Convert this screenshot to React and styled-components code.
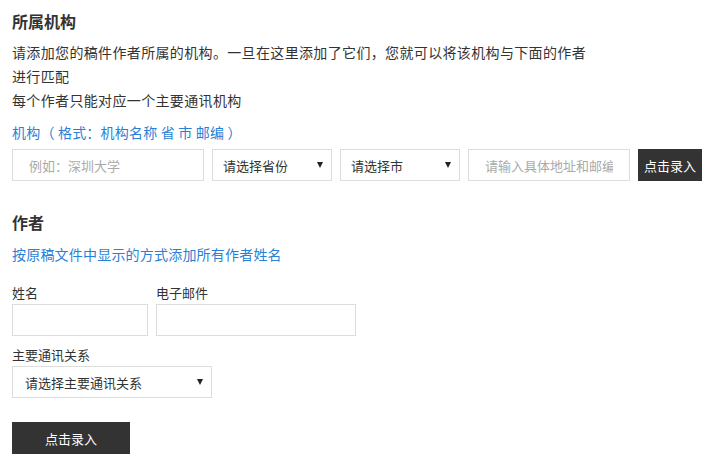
import React from 'react';
import styled, { createGlobalStyle } from 'styled-components';

const GlobalStyle = createGlobalStyle`
  html, body {
    margin: 0;
    padding: 0;
    background: #fff;
  }
  body {
    font-family: "Noto Sans CJK SC", "Liberation Sans", sans-serif;
    color: #333;
    font-size: 13px;
  }
  * {
    box-sizing: border-box;
  }
`;

const Page = styled.div`
  padding: 9px 12px 0;
  width: 721px;
`;

const Section = styled.section`
  margin-bottom: ${props => props.gap || 0}px;
`;

const Title = styled.h2`
  margin: 0;
  font-size: 16px;
  line-height: 24px;
  font-weight: bold;
  color: #333;
`;

const Intro = styled.p`
  margin: ${props => props.top || 0}px 0 0;
  font-size: 14px;
  line-height: 24px;
  letter-spacing: 0.35px;
  color: #333;
`;

const Hint = styled.p`
  margin: ${props => props.top || 0}px 0 0;
  font-size: 14px;
  line-height: 24px;
  letter-spacing: 0.2px;
  color: #2a7fd7;
  white-space: pre;
`;

const InputRow = styled.div`
  display: flex;
  gap: 8px;
  margin-top: ${props => props.top || 0}px;
`;

const TextInput = styled.input`
  width: ${props => props.width}px;
  height: 32px;
  border: 1px solid #ddd;
  border-radius: 0;
  padding: 0 ${props => props.pad || 10}px;
  font-family: inherit;
  font-size: 13px;
  color: #333;
  background: #fff;
  outline: none;

  &::placeholder {
    color: #aaa;
  }
`;

const SelectBox = styled.div`
  width: ${props => props.width}px;
  height: 32px;
  border: 1px solid #ddd;
  display: flex;
  align-items: center;
  justify-content: space-between;
  padding: 0 ${props => props.arrowPad || 8}px 0 ${props => props.pad || 10}px;
  font-size: 13px;
  color: #333;
  background: #fff;
  cursor: pointer;
`;

const Arrow = styled.span`
  width: 0;
  height: 0;
  border-left: 3px solid transparent;
  border-right: 3px solid transparent;
  border-top: 6px solid #222;
`;

const DarkButton = styled.button`
  width: ${props => props.width}px;
  height: 32px;
  border: 0;
  border-radius: 0;
  background: #333;
  color: #fff;
  font-family: inherit;
  font-size: 13px;
  padding: 0;
  cursor: pointer;
  margin-top: ${props => props.top || 0}px;
`;

const FieldRow = styled.div`
  display: flex;
  gap: 8px;
  margin-top: ${props => props.top || 0}px;
`;

const Field = styled.div`
  display: flex;
  flex-direction: column;
  gap: 2px;
  margin-top: ${props => props.top || 0}px;
`;

const FieldLabel = styled.label`
  font-size: 13px;
  line-height: 18px;
  color: #333;
`;

const Select = ({ width, pad, arrowPad, children }) => (
  <SelectBox width={width} pad={pad} arrowPad={arrowPad}>
    <span>{children}</span>
    <Arrow />
  </SelectBox>
);

const App = () => {
  return (
    <>
      <GlobalStyle />
      <Page>
        <Section gap={29}>
          <Title>所属机构</Title>
          <Intro top={7}>
            请添加您的稿件作者所属的机构。一旦在这里添加了它们，您就可以将该机构与下面的作者
            <br />
            进行匹配
            <br />
            每个作者只能对应一个主要通讯机构
          </Intro>
          <Hint top={8}>机构（ 格式：机构名称 省 市 邮编 ）</Hint>
          <InputRow top={5}>
            <TextInput width={192} pad={16} placeholder="例如：深圳大学" />
            <Select width={120} pad={10} arrowPad={8}>请选择省份</Select>
            <Select width={120} pad={10} arrowPad={8}>请选择市</Select>
            <TextInput width={162} pad={16} placeholder="请输入具体地址和邮编" />
            <DarkButton width={64}>点击录入</DarkButton>
          </InputRow>
        </Section>

        <Section>
          <Title>作者</Title>
          <Hint top={8}>按原稿文件中显示的方式添加所有作者姓名</Hint>
          <FieldRow top={18}>
            <Field>
              <FieldLabel>姓名</FieldLabel>
              <TextInput width={136} />
            </Field>
            <Field>
              <FieldLabel>电子邮件</FieldLabel>
              <TextInput width={200} />
            </Field>
          </FieldRow>
          <Field top={10}>
            <FieldLabel>主要通讯关系</FieldLabel>
            <Select width={200} pad={12} arrowPad={8}>请选择主要通讯关系</Select>
          </Field>
          <DarkButton width={118} top={24}>点击录入</DarkButton>
        </Section>
      </Page>
    </>
  );
};

export default App;
